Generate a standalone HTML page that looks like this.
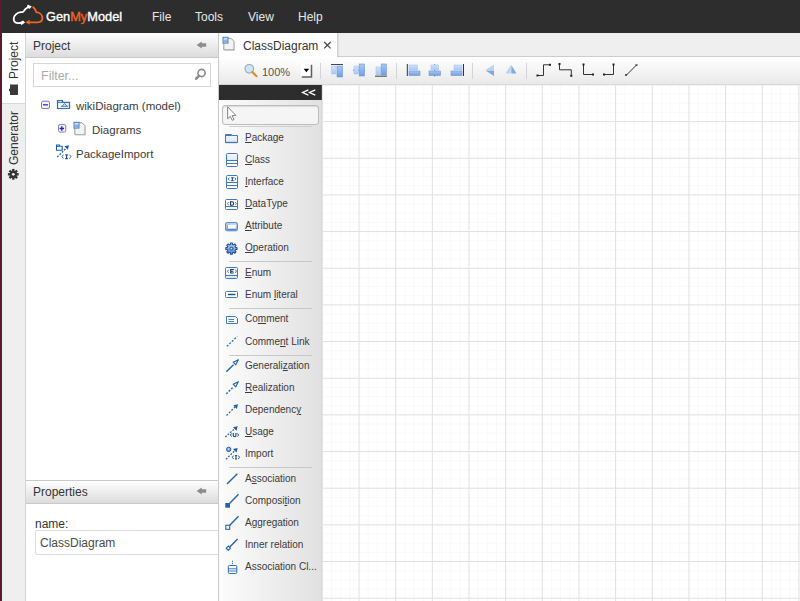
<!DOCTYPE html>
<html><head><meta charset="utf-8">
<style>
*{box-sizing:border-box;margin:0;padding:0}
html,body{width:800px;height:601px;overflow:hidden;background:#fff;font-family:"Liberation Sans",sans-serif;color:#333;position:relative}
.a{position:absolute}
.t{position:absolute;white-space:nowrap;line-height:1}
#strip{left:0;top:0;width:2px;height:601px;background:#5c1a2e}
#hdr{left:2px;top:0;width:798px;height:33px;background:#2d2d2d}
.menu{position:absolute;top:11px;font-size:12px;line-height:12px;color:#e8e8e8}
#tabs{left:2px;top:33px;width:24px;height:568px;background:#efefef;border-right:1px solid #d4d4d4}
#tabProj{left:2px;top:33px;width:23px;height:71px;background:#fff;border-bottom:1px solid #d8d8d8}
.vt{position:absolute;transform:rotate(-90deg);transform-origin:0 0;font-size:12px;line-height:12px;color:#333;white-space:nowrap}
#proj{left:26px;top:33px;width:192px;height:568px;background:#fff}
.phdr{position:absolute;left:26px;width:192px;height:25px;background:linear-gradient(#fefefe,#dcdcdc);border-bottom:1px solid #c9c9c9}
#filter{left:33px;top:63px;width:178px;height:24px;border:1px solid #d6d6d6;background:#fff}
#divider{left:218px;top:33px;width:1px;height:568px;background:#c8c8c8}
#tabbar{left:219px;top:33px;width:581px;height:24px;background:#efefef;border-bottom:1px solid #cdcdcd}
#tab{left:219px;top:33px;width:119px;height:25px;background:#fff;border-right:1px solid #d0d0d0;box-shadow:1px 0 1px rgba(0,0,0,0.06)}
#toolbar{left:219px;top:57px;width:581px;height:28px;background:linear-gradient(#fff,#e9e9e9);border-bottom:1px solid #d2d2d2}
#palette{left:219px;top:85px;width:103px;height:516px;background:linear-gradient(90deg,#fcfcfc,#e1e1e1);border-right:1px solid #d6d6d6}
#palhdr{left:219px;top:85px;width:103px;height:15px;background:#2d2d2d}
#canvas{left:322px;top:85px;width:478px;height:516px;background:#fff}
.pi{position:absolute;left:245px;font-size:10px;line-height:10px;color:#3a3a3a;white-space:nowrap}
.sep{position:absolute;left:229px;width:83px;height:1px;background:#c8c8c8}
.tr{font-size:11.5px;color:#3a3a3a}
svg.ov{position:absolute;left:0;top:0;width:800px;height:601px;overflow:visible}
</style></head><body>
<div id="strip" class="a"></div>
<div id="hdr" class="a"></div>
<div class="menu" style="left:152px">File</div>
<div class="menu" style="left:195px">Tools</div>
<div class="menu" style="left:248px">View</div>
<div class="menu" style="left:298px">Help</div>
<div class="t" style="left:46px;top:11px;font-size:12.8px;color:#fff;-webkit-text-stroke:0.35px #fff">Gen<span style="color:#f26522;-webkit-text-stroke:0.35px #f26522">My</span>Model</div>

<div id="tabs" class="a"></div>
<div id="tabProj" class="a"></div>
<div class="vt" style="left:8px;top:79px">Project</div>
<div class="vt" style="left:8px;top:165px">Generator</div>

<div id="proj" class="a"></div>
<div class="phdr" style="top:33px"></div>
<div class="t" style="left:33px;top:40px;font-size:12px">Project</div>
<div id="filter" class="a"></div>
<div class="t" style="left:41px;top:70px;font-size:12.5px;color:#aaa">Filter...</div>

<div class="t tr" style="left:76px;top:101px">wikiDiagram (model)</div>
<div class="t tr" style="left:92px;top:125px">Diagrams</div>
<div class="t tr" style="left:76px;top:149px">PackageImport</div>

<div class="phdr" style="top:480px;height:24px;border-top:1px solid #c9c9c9"></div>
<div class="t" style="left:33px;top:486px;font-size:12px">Properties</div>
<div class="t" style="left:35px;top:518px;font-size:12px">name:</div>
<div class="a" style="left:35px;top:530px;width:190px;height:25px;border:1px solid #dcdcdc;border-radius:2px;background:#fff"></div>
<div class="t" style="left:40px;top:537px;font-size:12px;color:#4a4a4a">ClassDiagram</div>

<div id="divider" class="a"></div>

<div id="tabbar" class="a"></div>
<div id="tab" class="a"></div>
<div class="t" style="left:243px;top:40px;font-size:12px">ClassDiagram</div>
<div id="toolbar" class="a"></div>
<div class="t" style="left:262px;top:67px;font-size:11px;color:#555">100%</div>

<div id="palette" class="a"></div>
<div id="palhdr" class="a"></div>
<div id="canvas" class="a"></div>
<!--GRID--><svg class="ov" viewBox="0 0 800 601"><path d="M331.50,85V601M340.67,85V601M349.83,85V601M368.16,85V601M377.33,85V601M386.50,85V601M404.82,85V601M413.99,85V601M423.15,85V601M441.48,85V601M450.65,85V601M459.81,85V601M478.14,85V601M487.31,85V601M496.47,85V601M514.80,85V601M523.97,85V601M533.13,85V601M551.46,85V601M560.63,85V601M569.79,85V601M588.12,85V601M597.29,85V601M606.45,85V601M624.78,85V601M633.95,85V601M643.12,85V601M661.44,85V601M670.61,85V601M679.77,85V601M698.11,85V601M707.27,85V601M716.43,85V601M734.76,85V601M743.93,85V601M753.09,85V601M771.42,85V601M780.59,85V601M789.75,85V601M323,94.10H800M323,103.27H800M323,112.44H800M323,130.76H800M323,139.93H800M323,149.09H800M323,167.42H800M323,176.59H800M323,185.75H800M323,204.08H800M323,213.25H800M323,222.41H800M323,240.74H800M323,249.91H800M323,259.07H800M323,277.40H800M323,286.57H800M323,295.74H800M323,314.06H800M323,323.23H800M323,332.39H800M323,350.72H800M323,359.89H800M323,369.05H800M323,387.38H800M323,396.55H800M323,405.71H800M323,424.04H800M323,433.21H800M323,442.37H800M323,460.70H800M323,469.87H800M323,479.03H800M323,497.36H800M323,506.53H800M323,515.69H800M323,534.02H800M323,543.19H800M323,552.36H800M323,570.68H800M323,579.85H800M323,589.01H800" stroke="#f9f9f9" stroke-width="1"/><path d="M322.34,85V601M359.00,85V601M395.66,85V601M432.32,85V601M468.98,85V601M505.64,85V601M542.30,85V601M578.96,85V601M615.62,85V601M652.28,85V601M688.94,85V601M725.60,85V601M762.26,85V601M798.92,85V601M323,84.94H800M323,121.60H800M323,158.26H800M323,194.92H800M323,231.58H800M323,268.24H800M323,304.90H800M323,341.56H800M323,378.22H800M323,414.88H800M323,451.54H800M323,488.20H800M323,524.86H800M323,561.52H800M323,598.18H800" stroke="#e0e0e0" stroke-width="1"/></svg><!--/GRID-->
<div class="a" style="left:222px;top:105px;width:97px;height:20px;border:1px solid #bdbdbd;border-radius:3px;background:linear-gradient(#f6f6f6,#f4f4f4);box-shadow:inset 0 1px 1px rgba(0,0,0,0.12)"></div>

<div class="pi" style="top:133px"><u>P</u>ackage</div>
<div class="pi" style="top:155px"><u>C</u>lass</div>
<div class="pi" style="top:177px"><u>I</u>nterface</div>
<div class="pi" style="top:199px"><u>D</u>ataType</div>
<div class="pi" style="top:221px"><u>A</u>ttribute</div>
<div class="pi" style="top:243px"><u>O</u>peration</div>
<div class="sep" style="top:261px"></div>
<div class="pi" style="top:268px"><u>E</u>num</div>
<div class="pi" style="top:290px">Enum <u>l</u>iteral</div>
<div class="sep" style="top:308px"></div>
<div class="pi" style="top:314px">Co<u>m</u>ment</div>
<div class="pi" style="top:337px">Comme<u>n</u>t Link</div>
<div class="sep" style="top:355px"></div>
<div class="pi" style="top:361px">Generali<u>z</u>ation</div>
<div class="pi" style="top:383px"><u>R</u>ealization</div>
<div class="pi" style="top:405px">Dependenc<u>y</u></div>
<div class="pi" style="top:427px"><u>U</u>sage</div>
<div class="pi" style="top:449px">Import</div>
<div class="sep" style="top:467px"></div>
<div class="pi" style="top:474px">A<u>s</u>sociation</div>
<div class="pi" style="top:496px">Composi<u>t</u>ion</div>
<div class="pi" style="top:518px">A<u>g</u>gregation</div>
<div class="pi" style="top:540px">Inner relation</div>
<div class="pi" style="top:562px">Association Cl...</div>

<svg class="ov" viewBox="0 0 800 601">
<!-- logo -->
<g fill="none" stroke-linecap="round" stroke-linejoin="round">
<path d="M28.5,7 C26.6,8 25.1,9 24.4,10.2 C23.9,11.1 23.5,11.9 22.6,12 L21,12.1 C17,12.4 13.8,15.5 13.7,18.8 C13.7,21.5 15.6,23.2 18.5,23.2 L21,23.1" stroke="#fff" stroke-width="1.8"/>
<path d="M33.2,7.2 C34.8,8.4 35.8,10 36.2,12.2 C39.8,12.6 42.4,15 42.4,18 C42.4,20.8 40.4,22.3 37.5,22.3 L28.5,22.3" stroke="#f26522" stroke-width="1.8"/>
</g>
<polygon points="27.6,4.6 31.8,6.4 29.4,8.9 27,6.9" fill="#fff"/>
<polygon points="19.3,22.6 23,20.4 25.1,22.4 21.6,25" fill="#fff"/>
<polygon points="25.2,22.3 30,19.8 29.3,22.3 30,24.8" fill="#f26522"/>

<!-- project tab icon -->
<path d="M10,84.5 H18 V95 H10 V91.5 L9,91 V89 L10,88.5 Z" fill="#3a3a3a"/>
<!-- generator gear -->
<g transform="translate(13.3,174.3)" fill="#333">
<circle r="3.6"/>
<g id="teeth"><rect x="-1.2" y="-5.4" width="2.4" height="10.8"/><rect x="-5.4" y="-1.2" width="10.8" height="2.4"/><rect x="-1.2" y="-5.4" width="2.4" height="10.8" transform="rotate(45)"/><rect x="-1.2" y="-5.4" width="2.4" height="10.8" transform="rotate(-45)"/></g>
<circle r="1.4" fill="#efefef"/>
</g>

<!-- header back arrows -->
<path d="M196.6,45 L201.8,41.5 V43.3 H206.2 V46.7 H201.8 V48.5 Z" fill="#8c8c8c"/>
<path d="M196.6,491 L201.8,487.5 V489.3 H206.2 V492.7 H201.8 V494.5 Z" fill="#8c8c8c"/>
<!-- filter search -->
<g fill="none" stroke="#8a8a8a">
<circle cx="201.6" cy="73" r="3.6" stroke-width="1.6"/>
<path d="M198.9,75.9 L196.2,78.7" stroke-width="2.6" stroke-linecap="round"/>
</g>

<!-- tree minus -->
<rect x="41.5" y="101.2" width="8" height="7.3" rx="1.5" fill="#f4f4ec" stroke="#7b7bc8" stroke-width="1"/>
<path d="M43,104.8 H48" stroke="#3c3cd0" stroke-width="1.4"/>
<!-- tree folder model -->
<path d="M57.5,108.5 V100.5 H62.5 V102.3 H69.5 V108.5 Z" fill="#eef5fc" stroke="#2c6db0" stroke-width="1.2"/>
<path d="M57.5,102.3 H62.5" stroke="#2c6db0" stroke-width="1"/>
<path d="M61,106.3 H68 M62.2,106.3 L64.6,103.5 L67,106.3" fill="none" stroke="#2c6db0" stroke-width="0.9"/>
<!-- tree plus -->
<rect x="58.5" y="124.6" width="7.3" height="7.5" rx="1.5" fill="#f4f4ec" stroke="#7b7bc8" stroke-width="1"/>
<path d="M59.6,128.5 H64 M61.8,126.2 V130.8" stroke="#2020d0" stroke-width="1.3"/>
<!-- diagram page -->
<path d="M74.8,122.7 H82 L85,125.7 V134.5 H74.8 Z" fill="#f3f3f3" stroke="#9a9a9a" stroke-width="1"/>
<path d="M75.5,135 H85.5 V126" fill="none" stroke="#c8c8c8" stroke-width="1"/>
<rect x="74" y="122.3" width="5" height="5.8" fill="#d4e4f6" stroke="#4a7fc0" stroke-width="1"/>
<path d="M74.5,125.2 H78.5 M74.5,126.7 H78.5" stroke="#4a7fc0" stroke-width="0.7"/>
<!-- package import -->
<path d="M56.5,150.3 V145 H59.3 V146.2 H62.2 V150.3 Z" fill="#fff" stroke="#1f5ea8" stroke-width="1.1"/>
<path d="M56.5,146.5 H59" stroke="#1f5ea8" stroke-width="0.8"/>
<path d="M57.3,157 L66,148.3" stroke="#1f5ea8" stroke-width="1.25" stroke-dasharray="1.8 1.4"/>
<path d="M69,145.2 L64.4,146.3 L67.9,149.8 Z" fill="#1f5ea8"/>
<path d="M63.4,154.6 L62.1,156.6 L63.4,158.6 M69.6,154.6 L70.9,156.6 L69.6,158.6" fill="none" stroke="#3a6fb5" stroke-width="1"/>
<path d="M65.3,154.8 H67.9 M65.3,158.6 H67.9 M66.6,154.8 V158.6" fill="none" stroke="#1f4f90" stroke-width="1.2"/>
<!-- tab page icon --><g transform="translate(-2,-1)">
<path d="M225.8,39.3 H233 L236,42.3 V50.8 H225.8 Z" fill="#f3f3f3" stroke="#9a9a9a" stroke-width="1"/>
<path d="M226.5,51.3 H236.5 V43" fill="none" stroke="#c8c8c8" stroke-width="1"/>
<rect x="225" y="38.3" width="5" height="5.8" fill="#d4e4f6" stroke="#4a7fc0" stroke-width="1"/>
<path d="M225.5,41.2 H229.5 M225.5,42.7 H229.5" stroke="#4a7fc0" stroke-width="0.7"/>
</g>
<!-- close x -->
<path d="M324.2,42 L330.6,48.4 M330.6,42 L324.2,48.4" stroke="#444" stroke-width="1.25"/>

<!-- toolbar: zoom -->
<circle cx="249.3" cy="68.8" r="4.3" fill="#cfe4fb" stroke="#9aa6b4" stroke-width="1.1"/>
<path d="M252.3,72 L256.5,76.2" stroke="#e08a2a" stroke-width="2.2" stroke-linecap="round"/>
<!-- dropdown -->
<rect x="300.8" y="63.3" width="10" height="13" fill="#fff"/>
<path d="M311.5,64.8 V76.9 H301.8" fill="none" stroke="#5e5e5e" stroke-width="1.5"/>
<path d="M303.6,68.8 H309.2 L306.4,72.3 Z" fill="#000"/>
<!-- separators -->
<path d="M320.5,63 V79 M396.5,63 V79 M472.5,63 V79 M526.5,63 V79" stroke="#d4d4d4" stroke-width="1"/>
<!-- align icons --><defs><linearGradient id="lr" x1="0" y1="0" x2="0" y2="1"><stop offset="0" stop-color="#cfe1f9"/><stop offset="1" stop-color="#a9c8f2"/></linearGradient><linearGradient id="dr" x1="0" y1="0" x2="0" y2="1"><stop offset="0" stop-color="#a9c7f2"/><stop offset="1" stop-color="#729de2"/></linearGradient></defs>
<g>
<path d="M331,64.5 H343" stroke="#444" stroke-width="1"/>
<rect x="331.5" y="66" width="4.5" height="8" fill="url(#lr)" stroke="#a8c6f0" stroke-width="0.6"/>
<rect x="337" y="66" width="5.5" height="11" fill="url(#dr)" stroke="#6a97dc" stroke-width="0.6"/>

<path d="M353,70.3 H365" stroke="#555" stroke-width="0.8"/>
<rect x="354" y="66" width="4.5" height="8" fill="url(#lr)" stroke="#a8c6f0" stroke-width="0.6"/>
<rect x="359.2" y="64" width="5.2" height="12" fill="url(#dr)" stroke="#6a97dc" stroke-width="0.6"/>

<rect x="376" y="67" width="4.5" height="8" fill="url(#lr)" stroke="#a8c6f0" stroke-width="0.6"/>
<rect x="381.2" y="64" width="5.2" height="11" fill="url(#dr)" stroke="#6a97dc" stroke-width="0.6"/>
<path d="M375,76.2 H387" stroke="#444" stroke-width="1"/>

<path d="M407.3,64 V76" stroke="#333" stroke-width="1"/>
<rect x="409" y="65" width="8.5" height="5" fill="url(#lr)" stroke="#a8c6f0" stroke-width="0.6"/>
<rect x="409" y="71" width="11" height="4.5" fill="url(#dr)" stroke="#6a97dc" stroke-width="0.6"/>

<path d="M434.7,64 V76.5" stroke="#444" stroke-width="0.8"/>
<rect x="431" y="65" width="7.5" height="5" fill="url(#lr)" stroke="#a8c6f0" stroke-width="0.6"/>
<rect x="429" y="71" width="11.5" height="4.5" fill="url(#dr)" stroke="#6a97dc" stroke-width="0.6"/>

<rect x="454" y="65" width="8" height="5" fill="url(#lr)" stroke="#a8c6f0" stroke-width="0.6"/>
<rect x="451" y="71" width="11" height="4.5" fill="url(#dr)" stroke="#6a97dc" stroke-width="0.6"/>
<path d="M463.5,64 V76" stroke="#333" stroke-width="1"/>

<path d="M485.5,70 L494,64.5 V70 Z" fill="#b9d3f4"/>
<path d="M485.5,70.5 L494,76 V70.5 Z" fill="#7fa8e6"/>
<path d="M505.5,73.5 L510.7,65 V73.5 Z" fill="#b9d3f4"/>
<path d="M511.3,65 L516.5,73.5 H511.3 Z" fill="#7fa8e6"/>
</g>
<!-- connector icons -->
<g fill="none" stroke="#333" stroke-width="1">
<path d="M537.5,75.5 H543.5 V64.8 H549.5"/>
<path d="M559.5,64 V69.8 H571.3 V75.8"/>
<path d="M583.5,64.5 V74.5 H592.5"/>
<path d="M604,74.5 H613.5 V64.5"/>
<path d="M626.5,75 L636.5,65"/>
</g>
<g fill="#222">
<rect x="536.5" y="74.5" width="2" height="2"/><rect x="549" y="63.8" width="2" height="2"/>
<rect x="558.5" y="63" width="2" height="2"/><rect x="570.3" y="74.8" width="2" height="2"/>
<rect x="582.5" y="63.5" width="2" height="2"/><rect x="592" y="73.5" width="2" height="2"/>
<rect x="603" y="73.5" width="2" height="2"/><rect x="612.5" y="63.5" width="2" height="2"/>
</g>
<path d="M625,74 L627,76 M627,74 L625,76 M635.5,64 L637.5,66 M637.5,64 L635.5,66" stroke="#333" stroke-width="0.8"/>

<!-- palette header << -->
<path d="M308.4,89.9 L302.6,92.5 L308.4,95.1 M315.3,89.9 L309.5,92.5 L315.3,95.1" fill="none" stroke="#fff" stroke-width="1.3"/>
<!-- pointer -->
<path d="M227.6,106.8 V118.8 L230.3,116.3 L232.2,120.3 L234,119.5 L232.1,115.6 L235.8,115.4 Z" fill="#fff" stroke="#777" stroke-width="0.9" stroke-linejoin="round"/>
<!-- separator below select -->
<path d="M229,126.5 H312" stroke="#cfcfcf" stroke-width="1"/>

<!-- palette icons -->
<defs><linearGradient id="lb" x1="0" y1="0" x2="0" y2="1"><stop offset="0" stop-color="#f4f8fd"/><stop offset="1" stop-color="#dce8f7"/></linearGradient></defs>
<g stroke="#4177bd" stroke-width="1" fill="none">
<!-- package -->
<path d="M225.5,142.5 V134.5 H231.5 V135.5 H237.5 V142.5 Z" fill="url(#lb)"/>
<path d="M225.5,135.5 H231.5" stroke-width="1"/>
<path d="M225.5,142.5 H237.5" stroke-width="1.3"/>
<!-- class -->
<rect x="226.5" y="153.5" width="11" height="13" rx="1" fill="#fff"/>
<rect x="227" y="154" width="10" height="6.5" fill="url(#lb)" stroke="none"/>
<path d="M226.5,160.5 H237.5 M226.5,163.5 H237.5"/>
<!-- interface -->
<rect x="226.5" y="175.5" width="11" height="13" rx="1" fill="#fff"/>
<path d="M226.5,182.5 H237.5 M226.5,185.5 H237.5"/>
<!-- datatype -->
<rect x="225.5" y="199.5" width="12" height="10" rx="1" fill="#fff"/>
<path d="M225.5,206.5 H237.5"/>
<!-- enum -->
<rect x="225.5" y="267.5" width="12" height="11" rx="1" fill="url(#lb)"/>
<rect x="226.5" y="268.5" width="10" height="6" fill="#fff" stroke="none"/>
<path d="M225.5,275.5 H237.5"/>
<!-- enum literal -->
<rect x="225.5" y="291.5" width="12" height="6" rx="1" fill="#fff"/>
<!-- comment -->
<path d="M226.5,316.5 H235.5 L237.5,318.5 V323.5 H226.5 Z" fill="#fff"/>
</g>
<g fill="none" stroke="#1f4a8a" stroke-width="1">
<path d="M229.3,177.5 L228.2,179 L229.3,180.5 M234.7,177.5 L235.8,179 L234.7,180.5" stroke="#4a7ec0"/>
<path d="M231.2,177.6 H233.6 M231.2,180.6 H233.6 M232.4,177.6 V180.6" stroke="#2a5fa5" stroke-width="1.2"/>
<path d="M228.6,202 L227.5,203.6 L228.6,205.2 M235.3,202 L236.4,203.6 L235.3,205.2" stroke="#4a7ec0"/>
<path d="M230.6,201.8 V205.3 H232 C234.2,205.3 234.2,201.8 232,201.8 Z" stroke="#15306a" stroke-width="1.1"/>
<path d="M228.6,269.6 L227.5,271.2 L228.6,272.8 M235.3,269.6 L236.4,271.2 L235.3,272.8" stroke="#3a6eb0"/>
<path d="M233.8,269.5 H230.7 V273 H233.8 M230.7,271.2 H233.4" stroke="#15306a" stroke-width="1.1"/>
<path d="M227.8,294.5 H235.4" stroke="#1c4a88" stroke-width="1.4"/>
<path d="M228.5,319.5 H234 M228.5,321.5 H234" stroke="#3570b5" stroke-width="0.9"/>
</g>
<!-- attribute -->
<defs>
<linearGradient id="ag" x1="0" y1="0" x2="0" y2="1"><stop offset="0" stop-color="#c3d7f0"/><stop offset="1" stop-color="#7fa6d9"/></linearGradient>
<linearGradient id="gg" x1="0" y1="0" x2="0" y2="1"><stop offset="0" stop-color="#c4d2ee"/><stop offset="1" stop-color="#5b84c8"/></linearGradient>
</defs>
<rect x="225.5" y="222.5" width="12" height="8.3" rx="1.6" fill="url(#ag)" stroke="#5b8dca" stroke-width="1"/>
<rect x="227.5" y="224.8" width="8.3" height="4" fill="#fff"/>
<path d="M227.5,229.3 H236" stroke="#3f76ba" stroke-width="0.9"/>
<path d="M227.5,224.8 V229" stroke="#6d98cf" stroke-width="0.7"/>
<!-- operation gear -->
<g transform="translate(231.4,248.6)">
<path d="M-0.97,-4.19 L-0.94,-5.62 L0.94,-5.62 L0.97,-4.19 L2.28,-3.65 L3.31,-4.64 L4.64,-3.31 L3.65,-2.28 L4.19,-0.97 L5.62,-0.94 L5.62,0.94 L4.19,0.97 L3.65,2.28 L4.64,3.31 L3.31,4.64 L2.28,3.65 L0.97,4.19 L0.94,5.62 L-0.94,5.62 L-0.97,4.19 L-2.28,3.65 L-3.31,4.64 L-4.64,3.31 L-3.65,2.28 L-4.19,0.97 L-5.62,0.94 L-5.62,-0.94 L-4.19,-0.97 L-3.65,-2.28 L-4.64,-3.31 L-3.31,-4.64 L-2.28,-3.65 Z" fill="url(#gg)" stroke="#1f56a3" stroke-width="1.1" stroke-linejoin="round"/>
<circle r="1.5" fill="none" stroke="#1f4f98" stroke-width="1"/>
<circle r="0.6" fill="#fff"/>
</g>
<!-- comment link -->
<path d="M226.8,346.3 L237.2,336.5" stroke="#2f6db3" stroke-width="1.3" stroke-dasharray="2 1.5"/>
<!-- generalization -->
<path d="M226.3,371.8 L233.5,364.8" stroke="#2463ab" stroke-width="1.4"/>
<path d="M238.3,359.7 L233.2,362.2 L235.8,364.8 Z" fill="#fff" stroke="#2463ab" stroke-width="1.2" stroke-linejoin="round"/>
<!-- realization -->
<path d="M226.3,393.8 L233.5,386.8" stroke="#2463ab" stroke-width="1.4" stroke-dasharray="2 1.4"/>
<path d="M238.3,381.7 L233.2,384.2 L235.8,386.8 Z" fill="#fff" stroke="#2463ab" stroke-width="1.2" stroke-linejoin="round"/>
<!-- dependency -->
<path d="M226.5,415.5 L235.5,406.5" stroke="#2463ab" stroke-width="1.3" stroke-dasharray="2 1.5"/>
<path d="M238,404.2 L233.3,405.3 L236.9,408.9 Z" fill="#2463ab"/>
<!-- usage -->
<path d="M225.3,437 L234.5,428.8" stroke="#2463ab" stroke-width="1.25" stroke-dasharray="1.8 1.4"/>
<path d="M237.6,426.2 L233,427.3 L236.5,430.8 Z" fill="#1f56a3"/>
<path d="M231.7,433.4 L230.4,435 L231.7,436.6 M237.4,433.4 L238.7,435 L237.4,436.6" fill="none" stroke="#1f4f90" stroke-width="1"/>
<path d="M233.3,433 V435.5 C233.3,437 235.9,437 235.9,435.5 V433" fill="none" stroke="#1f4f90" stroke-width="1.2"/>
<!-- import -->
<defs><radialGradient id="ig" cx="0.45" cy="0.4" r="0.6"><stop offset="0" stop-color="#c9daf2"/><stop offset="1" stop-color="#4b7cc2"/></radialGradient></defs>
<circle cx="228.7" cy="449.4" r="2.2" fill="url(#ig)" stroke="#1f56a3" stroke-width="0.9"/>
<path d="M226,459.3 L234.8,450.6" stroke="#2463ab" stroke-width="1.25" stroke-dasharray="1.8 1.4"/>
<path d="M237.6,448 L233,449.1 L236.5,452.6 Z" fill="#1f56a3"/>
<path d="M233.6,455.6 L232.3,457.3 L233.6,459 M238.3,455.6 L239.6,457.3 L238.3,459" fill="none" stroke="#1f4f90" stroke-width="1"/>
<path d="M235,455.6 H237 M235,459 H237 M236,455.6 V459" fill="none" stroke="#1f4f90" stroke-width="1.1"/>
<!-- association -->
<path d="M227,484 L237.3,473.8" stroke="#2463ab" stroke-width="1.4"/>
<!-- composition -->
<path d="M229.5,503.5 L238.5,494.2" stroke="#2463ab" stroke-width="1.4"/>
<rect x="225.3" y="503" width="4.7" height="4.7" fill="#2463ab"/>
<!-- aggregation -->
<path d="M229.5,525.5 L238.5,516.2" stroke="#2463ab" stroke-width="1.4"/>
<rect x="225.8" y="525.3" width="3.9" height="4" fill="#fff" stroke="#2463ab" stroke-width="1.1"/>
<!-- inner relation -->
<path d="M229.5,547.3 L237.6,539" stroke="#2463ab" stroke-width="1.4"/>
<path d="M226.2,548.2 L228.3,546 L230.4,548.2 L228.3,550.4 Z" fill="#fff" stroke="#2463ab" stroke-width="1.1"/>
<!-- association class -->
<path d="M232.5,560.8 V565" stroke="#2463ab" stroke-width="1" stroke-dasharray="1 1"/>
<rect x="228.3" y="565.5" width="8.5" height="8" rx="1" fill="#fff" stroke="#2f6db3" stroke-width="1"/>
<path d="M228.3,568.8 H236.8 M228.3,571 H236.8" stroke="#2f6db3" stroke-width="0.9"/>
</svg>
</body></html>
